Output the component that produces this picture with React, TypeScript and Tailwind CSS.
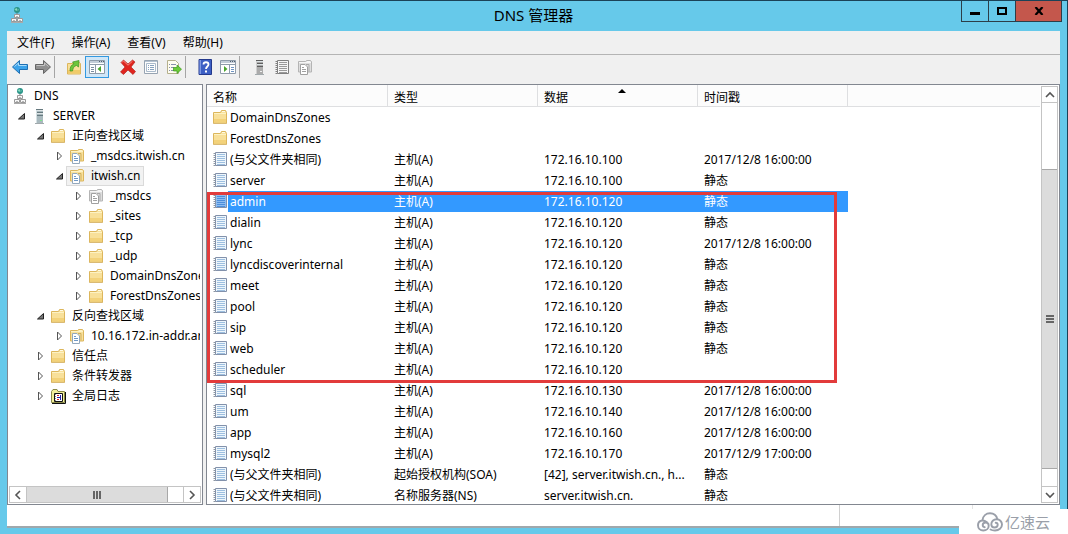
import { useState, type ReactNode } from 'react';
import clsx from 'clsx';

type IconName = 'root' | 'server' | 'folder' | 'zone' | 'zoneGray' | 'log';

type TreeNode = {
  label: string;
  level: 0 | 1 | 2 | 3 | 4;
  icon: IconName;
  open?: boolean;
};

const tree: TreeNode[] = [
  { label: 'DNS', level: 0, icon: 'root' },
  { label: 'SERVER', level: 1, icon: 'server', open: true },
  { label: '正向查找区域', level: 2, icon: 'folder', open: true },
  { label: '_msdcs.itwish.cn', level: 3, icon: 'zone' },
  { label: 'itwish.cn', level: 3, icon: 'zone', open: true },
  { label: '_msdcs', level: 4, icon: 'zoneGray' },
  { label: '_sites', level: 4, icon: 'folder' },
  { label: '_tcp', level: 4, icon: 'folder' },
  { label: '_udp', level: 4, icon: 'folder' },
  { label: 'DomainDnsZones', level: 4, icon: 'folder' },
  { label: 'ForestDnsZones', level: 4, icon: 'folder' },
  { label: '反向查找区域', level: 2, icon: 'folder', open: true },
  { label: '10.16.172.in-addr.arpa', level: 3, icon: 'zone' },
  { label: '信任点', level: 2, icon: 'folder' },
  { label: '条件转发器', level: 2, icon: 'folder' },
  { label: '全局日志', level: 2, icon: 'log' },
];

const indent = {
  0: 'pl-0',
  1: 'pl-2',
  2: 'pl-[27px]',
  3: 'pl-[46px]',
  4: 'pl-[65px]',
};

const SAME = '(与父文件夹相同)';
const HOST = '主机(A)';
const STATIC = '静态';

const records: string[][] = [
  ['DomainDnsZones', '', '', ''],
  ['ForestDnsZones', '', '', ''],
  [SAME, HOST, '172.16.10.100', '2017/12/8 16:00:00'],
  ['server', HOST, '172.16.10.100', STATIC],
  ['admin', HOST, '172.16.10.120', STATIC],
  ['dialin', HOST, '172.16.10.120', STATIC],
  ['lync', HOST, '172.16.10.120', '2017/12/8 16:00:00'],
  ['lyncdiscoverinternal', HOST, '172.16.10.120', STATIC],
  ['meet', HOST, '172.16.10.120', STATIC],
  ['pool', HOST, '172.16.10.120', STATIC],
  ['sip', HOST, '172.16.10.120', STATIC],
  ['web', HOST, '172.16.10.120', STATIC],
  ['scheduler', HOST, '172.16.10.120', ''],
  ['sql', HOST, '172.16.10.130', '2017/12/8 16:00:00'],
  ['um', HOST, '172.16.10.140', '2017/12/8 16:00:00'],
  ['app', HOST, '172.16.10.160', '2017/12/8 16:00:00'],
  ['mysql2', HOST, '172.16.10.170', '2017/12/9 17:00:00'],
  [SAME, '起始授权机构(SOA)', '[42], server.itwish.cn., h...', STATIC],
  [SAME, '名称服务器(NS)', 'server.itwish.cn.', STATIC],
];

function Svg({ children }: { children: ReactNode }) {
  return (
    <svg viewBox="0 0 16 16" className="size-4 shrink-0" fill="none" aria-hidden="true">
      {children}
    </svg>
  );
}

function FolderIcon() {
  return (
    <Svg>
      <path d="M1.500 3.500h7l1-2h4l1 2v10.500h-13z" fill="#f8e09a" stroke="#dcb65c" />
      <path d="M10 2.500h3" stroke="#fffbe6" />
      <path d="M2 4.500h12" stroke="#fdf2c4" />
      <path d="M2 10h12v3.500H2z" fill="#f3d27a" />
      <path d="M1 14.500h14" stroke="#c79a3c" strokeOpacity=".5" />
    </Svg>
  );
}

function ZoneIcon({ gray = false }: { gray?: boolean }) {
  return (
    <Svg>
      <path
        d="M1.500 2.500h7l1-1h4l1 1v10.500h-13z"
        fill={gray ? '#dedede' : '#f8e09a'}
        stroke={gray ? '#b4b4b4' : '#dcb65c'}
      />
      <path d="M10 2.500h3M2 3.500h12" stroke={gray ? '#f6f6f6' : '#fdf2c4'} />
      <path d="M9 5.500h3v7" stroke={gray ? '#aaa' : '#cfae5e'} />
      <path d="M3.500 5.500h4.500l2.500 2.500v7.500h-7z" fill="#fff" stroke={gray ? '#a0a0a0' : '#93a8bd'} />
      <path d="M5 8.500h2M5 10.500h4M5 12.500h4" stroke={gray ? '#a0a0a0' : '#6f98c6'} />
    </Svg>
  );
}

function RecordIcon({ gray = false, selected = false }: { gray?: boolean; selected?: boolean }) {
  const line = gray ? '#9a9a9a' : selected ? '#4d8fdc' : '#9dbfe0';
  return (
    <Svg>
      <path
        d="M3.500 1.500h11v13h-11z"
        fill={selected ? '#8fbdf0' : gray ? '#f6f6f6' : '#eef6fc'}
        stroke={gray ? '#808080' : '#8291ab'}
      />
      <path d="M5 3.500h8M5 5.500h8M5 7.500h8M5 9.500h8M5 11.500h8M5 13.500h8" stroke={line} />
      <path
        d="M1.500 2.500h2M1.500 4.500h2M1.500 6.500h2M1.500 8.500h2M1.500 10.500h2M1.500 12.500h2M1.500 14.500h2"
        stroke={gray ? '#808080' : '#8d96a2'}
      />
    </Svg>
  );
}

function RootIcon() {
  return (
    <Svg>
      <circle cx="8" cy="3" r="3" fill="#2a9488" />
      <path d="M6 2.500c1-1.500 2-1 2 0s-1 1.500-2 0zM8.500 3.500l1.500-1" fill="#8fe0c4" stroke="#8fe0c4" strokeWidth=".6" />
      <path d="M8 6v2" stroke="#777" />
      <path d="M5.500 7.500h5v3h-5zM2.500 11.500h5v3h-5zM8.500 11.500h5v3h-5z" fill="#f7f7f7" stroke="#999" />
      <path d="M2 15.500h12" stroke="#aaa" />
      <path d="M7 9.500h2M4 13.500h2M10 13.500h2" stroke="#b5b5b5" />
    </Svg>
  );
}

function ServerIcon({ gray = false }: { gray?: boolean }) {
  return (
    <Svg>
      <path d="M5 1h7v14H5z" fill={gray ? '#ababab' : '#a9b9be'} />
      <path d="M5 1h1v14H5z" fill={gray ? '#cfcfcf' : '#d5e0e3'} />
      <path d="M5 1.500h7M6 4.500h6M6 7.500h6" stroke={gray ? '#5f5f5f' : '#66797f'} />
      <path d="M6 2.500h6M6 5.500h6" stroke="#dde4e6" />
      <path d="M9 12h2v1H9z" fill={gray ? '#eee' : '#7be38a'} />
      <path d="M4 15.500h9" stroke="#a1a9ac" />
    </Svg>
  );
}

function LogIcon() {
  return (
    <Svg>
      <path d="M1.500 3.500l1.500-2h4l1 2h6.500v11h-13z" fill="#f1ef9a" stroke="#8a8a4a" />
      <path d="M15.500 4v11.500H2" stroke="#111" />
      <path d="M4.500 5.500h8v8h-8z" fill="#fff" stroke="#111" />
      <path d="M5 6v7" stroke="#111" strokeDasharray="1 1" />
      <path d="M7 7.500h2M7 11.500h2" stroke="#d22" />
      <path d="M10.500 7v5M7 9.500h3" stroke="#22a" />
    </Svg>
  );
}

function NodeIcon({ name }: { name: IconName }) {
  if (name === 'root') return <RootIcon />;
  if (name === 'server') return <ServerIcon />;
  if (name === 'zone') return <ZoneIcon />;
  if (name === 'zoneGray') return <ZoneIcon gray />;
  if (name === 'log') return <LogIcon />;
  return <FolderIcon />;
}

function ArrowShape({ fill, edge, shine }: { fill: string; edge: string; shine: string }) {
  return (
    <>
      <path d="M.5 8L7.500 1.500v4h8v5h-8v4z" fill={fill} stroke={edge} strokeLinejoin="round" />
      <path d="M2.500 7.500l4-3.500v2.500h8" stroke={shine} />
    </>
  );
}

function ConsoleIcon({ left = false }: { left?: boolean }) {
  return (
    <Svg>
      <path d="M.5 1.500h15v13H.5z" fill="#fff" stroke="#8f9caa" />
      <path d="M1 2h14v2H1z" fill="#c3cdd8" />
      <path d="M10 2.500h1M12 2.500h1M14 2.500h1" stroke="#51606f" />
      <path d="M1 5.500h14" stroke="#8f9caa" />
      {left ? (
        <>
          <path d="M6.500 6v8" stroke="#8f9caa" />
          <path d="M2 8.500h3M2 10.500h3M2 12.500h3" stroke="#7b8da0" />
          <path d="M12 7v6L8.500 10z" fill="#4aa52e" />
        </>
      ) : (
        <>
          <path d="M9.500 6v8" stroke="#8f9caa" />
          <path d="M11 8.500h3M11 10.500h3M11 12.500h3" stroke="#6f94c2" />
          <path d="M4 7v6l3.500-3z" fill="#4aa52e" />
        </>
      )}
    </Svg>
  );
}

function ToolButton({ label, pressed, children }: { label: string; pressed?: boolean; children: ReactNode }) {
  return (
    <button
      type="button"
      aria-label={label}
      aria-pressed={pressed}
      className={clsx(
        'flex h-[22px] shrink-0 items-center justify-center border',
        pressed ? 'w-6 border-[#3399e0] bg-[#cfe6f7]' : 'w-[23px] border-transparent hover:bg-[#dcebf7]',
      )}
    >
      {children}
    </button>
  );
}

function ToolSeparator() {
  return <span className="mr-[7px] h-[22px] w-px shrink-0 bg-[#a5a5a5]" />;
}

function TitleBar() {
  return (
    <header className="flex h-[30px] shrink-0 items-start">
      <span className="mt-[6px] ml-[9px] w-[97px]">
        <RootIcon />
      </span>
      <h1 className="flex-1 pt-0.5 text-center text-[15px] leading-6">DNS 管理器</h1>
      <div className="mr-[5px] flex h-[21px] border border-t-0 border-[#2c3e48]">
        <button type="button" aria-label="最小化" className="flex w-[27px] items-center justify-center border-r border-[#2c3e48]">
          <span className="mt-1 h-[3px] w-[10px] bg-black" />
        </button>
        <button type="button" aria-label="最大化" className="flex w-[26px] items-center justify-center">
          <span className="h-2 w-[10px] border-2 border-black" />
        </button>
        <button type="button" aria-label="关闭" className="flex w-[46px] items-center justify-center border-l border-[#2c3e48] bg-[#c4574c]">
          <svg viewBox="0 0 10 8" className="h-2 w-[10px]" aria-hidden="true">
            <path d="M1.500 0l7 8M8.500 0l-7 8" stroke="#000" strokeWidth="2.200" />
          </svg>
        </button>
      </div>
    </header>
  );
}

function MenuBar() {
  return (
    <nav className="flex h-6 shrink-0 items-center gap-px border-b border-[#b4b4b4] pl-0.5">
      {['文件(F)', '操作(A)', '查看(V)', '帮助(H)'].map((item) => (
        <button key={item} type="button" className="px-2 leading-5 hover:bg-[#dcebf7]">
          {item}
        </button>
      ))}
    </nav>
  );
}

function ToolBar() {
  return (
    <div role="toolbar" className="flex h-[29px] shrink-0 items-start pt-px pl-px">
      <ToolButton label="后退">
        <Svg>
          <ArrowShape fill="#3ba3ea" edge="#1f6fb2" shine="#a9dcfb" />
        </Svg>
      </ToolButton>
      <ToolButton label="前进">
        <Svg>
          <g transform="matrix(-1 0 0 1 16 0)">
            <ArrowShape fill="#8f8f8f" edge="#666" shine="#c4c4c4" />
          </g>
        </Svg>
      </ToolButton>
      <ToolSeparator />
      <ToolButton label="向上">
        <Svg>
          <path d="M1.500 4.500h7l1-1h4l1 1v10.500h-13z" fill="#f8e09a" stroke="#dcb65c" />
          <path d="M2 11h12v3.500H2z" fill="#f0cb6a" />
          <path d="M4 12c0-4 1-6 4-7L6.500 3 13 1.500 12.500 8l-2-1.500C8 7 7 9 6.500 12z" fill="#6cc63c" stroke="#3f9420" strokeWidth=".7" />
        </Svg>
      </ToolButton>
      <ToolButton label="显示/隐藏控制台树" pressed>
        <ConsoleIcon left />
      </ToolButton>
      <span className="w-[7px] shrink-0" />
      <ToolButton label="删除">
        <Svg>
          <path d="M1 3.500L3.500 1 8 5l4.500-4L15 3l-4 5 4.500 4.500L13 15.500 8 11l-4.500 4.500L.5 13 5 8z" fill="#e0251f" stroke="#a91513" strokeWidth=".6" />
          <path d="M2 3.500L3.500 2 8 6.200 12.500 2.200" stroke="#f58a80" />
        </Svg>
      </ToolButton>
      <ToolButton label="属性">
        <Svg>
          <path d="M1.500 1.500h13v13h-13z" fill="#fdfdfd" stroke="#97a4b2" />
          <path d="M2 2.500h12" stroke="#b4c3d2" />
          <path d="M3.500 4.500h9v8h-9z" stroke="#a9bacb" />
          <path d="M5 6.500h1M7 6.500h4M5 8.500h1M7 8.500h4M5 10.500h1M7 10.500h4" stroke="#86a2bf" />
        </Svg>
      </ToolButton>
      <ToolButton label="导出列表">
        <Svg>
          <path d="M1.500 1.500h8l3 3v10h-11z" fill="#fffdf0" stroke="#b5b08d" />
          <path d="M3 5.500h1M5 5.500h5M3 8.500h1M5 8.500h3M3 11.500h1M5 11.500h5" stroke="#8a92ad" />
          <path d="M7.500 8.500H11V6l4.500 4.200L11 14.500V12H7.500z" fill="#6ccb3a" stroke="#3c9a1d" strokeWidth=".7" />
        </Svg>
      </ToolButton>
      <ToolSeparator />
      <ToolButton label="帮助">
        <Svg>
          <path d="M2 .5h12.500v15H2z" fill="#3c5fc4" stroke="#24398c" />
          <path d="M2.500 1h1.500v14H2.500z" fill="#7d98e2" />
          <path d="M6.500 5.500c0-3 5-3 5 0 0 2-2.500 2-2.500 4.500" stroke="#fff" strokeWidth="1.800" />
          <path d="M8 11.500h2v2H8z" fill="#fff" />
        </Svg>
      </ToolButton>
      <ToolButton label="显示/隐藏操作窗格">
        <ConsoleIcon />
      </ToolButton>
      <ToolSeparator />
      <ToolButton label="新建服务器">
        <ServerIcon gray />
      </ToolButton>
      <ToolButton label="新建记录">
        <RecordIcon gray />
      </ToolButton>
      <ToolButton label="新建区域">
        <ZoneIcon gray />
      </ToolButton>
    </div>
  );
}

function Expander({ open }: { open?: boolean }) {
  return (
    <svg viewBox="0 0 9 10" className="mr-0.5 h-[10px] w-[9px] shrink-0" aria-hidden="true">
      {open ? (
        <path d="M7.500 2.500v5.500H1.500z" fill="#777" stroke="#222" />
      ) : (
        <path d="M2.500 1l4 4-4 4z" fill="#fff" stroke="#555" />
      )}
    </svg>
  );
}

function Chevron({ d }: { d: string }) {
  return (
    <svg viewBox="0 0 10 10" className="size-[10px]" fill="none" aria-hidden="true">
      <path d={d} stroke="#555" strokeWidth="1.600" />
    </svg>
  );
}

function TreePane() {
  const [current, setCurrent] = useState('itwish.cn');

  return (
    <aside className="flex w-[196px] shrink-0 flex-col border border-[#828790] bg-white p-px">
      <ul role="tree" className="mr-px min-h-0 flex-1 overflow-hidden">
        {tree.map((node, i) => (
          <li
            key={i}
            role="treeitem"
            aria-expanded={node.open}
            aria-selected={node.label === current}
            className={clsx('flex h-5 items-center', indent[node.level])}
          >
            {node.level > 0 && <Expander open={node.open} />}
            <button
              type="button"
              onClick={() => setCurrent(node.label)}
              className={clsx(
                'flex h-5 items-center gap-1.5 border px-0.5 whitespace-nowrap',
                node.label === current ? 'border-[#dadada] bg-[#f2f2f2]' : 'border-transparent',
              )}
            >
              <NodeIcon name={node.icon} />
              {node.label}
            </button>
          </li>
        ))}
      </ul>
      <div className="flex h-[17px] shrink-0 border border-[#c4c4c4]">
        <button type="button" aria-label="向左滚动" className="flex w-4 items-center justify-center">
          <Chevron d="M7 1L3 5l4 4" />
        </button>
        <div className="flex flex-1 border-x border-[#c4c4c4]">
          <div className="flex w-[141px] items-center justify-center gap-px border-r border-[#a8a8a8] bg-[#dcdcdc]">
            <span className="h-2 w-0.5 bg-[#666]" />
            <span className="h-2 w-0.5 bg-[#666]" />
            <span className="h-2 w-0.5 bg-[#666]" />
          </div>
        </div>
        <button type="button" aria-label="向右滚动" className="flex w-4 items-center justify-center">
          <Chevron d="M3 1l4 4-4 4" />
        </button>
      </div>
    </aside>
  );
}

function RecordTable() {
  const [selected, setSelected] = useState(4);

  return (
    <table className="w-full table-fixed border-separate border-spacing-0 text-left">
      <colgroup>
        <col className="w-[181px]" />
        <col className="w-[150px]" />
        <col className="w-[160px]" />
        <col className="w-[150px]" />
        <col />
      </colgroup>
      <thead>
        <tr className="bg-[#fcfcfc]">
          {['名称', '类型', '数据', '时间戳'].map((title) => (
            <th key={title} scope="col" className="relative border-r border-b border-[#dedfe1] p-0 pt-1 pl-1.5 leading-[17px] font-normal">
              {title}
              {title === '数据' && (
                <svg viewBox="0 0 8 4" className="absolute top-1 left-1/2 h-1 w-2" aria-hidden="true">
                  <path d="M0 4l4-4 4 4z" fill="#000" />
                </svg>
              )}
            </th>
          ))}
          <td className="border-b border-[#dedfe1] p-0" />
        </tr>
      </thead>
      <tbody>
        {records.map(([name, type, data, time], i) => {
          const active = i === selected;
          const fill = active && 'bg-[#3399ff] text-white';
          return (
            <tr key={i} className="h-[21px] leading-[21px] whitespace-nowrap" onClick={() => setSelected(i)}>
              <td className="p-0">
                <div className="flex h-[21px] items-start pl-[5px]">
                  <span className="pt-0.5">{type ? <RecordIcon selected={active} /> : <FolderIcon />}</span>
                  <span className={clsx('h-[21px] flex-1 pl-0.5', fill)}>{name}</span>
                </div>
              </td>
              <td className={clsx('p-0 pl-1.5', fill)}>{type}</td>
              <td className={clsx('p-0 pl-1.5', fill)}>{data}</td>
              <td className={clsx('p-0 pl-1.5', fill)}>{time}</td>
              <td className="p-0" />
            </tr>
          );
        })}
      </tbody>
    </table>
  );
}

function ListPane() {
  return (
    <main className="flex min-w-0 flex-1 border border-[#828790] bg-white">
      <div className="relative min-w-0 flex-1 overflow-hidden">
        <RecordTable />
        {/* frame around the Lync host records */}
        <div className="pointer-events-none absolute top-[107px] left-0 h-[191px] w-[630px] border-3 border-[#e23b3b]" />
      </div>
      <div className="m-px flex w-[17px] shrink-0 flex-col border border-[#c4c4c4]">
        <button type="button" aria-label="向上滚动" className="flex h-4 items-center justify-center border-b border-[#c4c4c4]">
          <Chevron d="M1 7l4-4 4 4" />
        </button>
        <div className="flex min-h-0 flex-1 flex-col pt-[66px] pb-[17px]">
          <div className="flex flex-1 flex-col items-center justify-center gap-px border-y border-[#a8a8a8] bg-[#dcdcdc]">
            <span className="h-0.5 w-2 bg-[#666]" />
            <span className="h-0.5 w-2 bg-[#666]" />
            <span className="h-0.5 w-2 bg-[#666]" />
          </div>
        </div>
        <button type="button" aria-label="向下滚动" className="flex h-4 items-center justify-center border-t border-[#c4c4c4]">
          <Chevron d="M1 3l4 4 4-4" />
        </button>
      </div>
    </main>
  );
}

function StatusBar() {
  return (
    <footer className="flex h-[23px] shrink-0 border-b-2 border-[#a0a8ac] bg-white">
      <span className="flex-1 border-r border-[#d0d0d0]" />
      <span className="w-[133px] border-r border-[#e4e4e4]" />
      <span className="w-[87px]" />
    </footer>
  );
}

function Watermark() {
  return (
    <div className="absolute right-0 bottom-0 flex h-[25px] w-[109px] items-center gap-0.5 bg-white pl-[18px] text-[15px] leading-5 text-[#9a9fa9]">
      <svg viewBox="0 0 26 20" className="h-5 w-[26px]" fill="none" stroke="#9a9fa9" strokeWidth="1.900" strokeLinecap="round" aria-hidden="true">
        <path d="M5.500 8C6 4 9 1.200 13 1.200c3.800 0 6.500 2.400 7.300 5.800" />
        <path d="M10 10.200C5 6.500 1 9.500 1 13.200c0 3 2.300 5.300 5.300 5.300 3.200 0 5.400-2.300 5.400-4.800 0-1.800-1.300-3.200-3-3.200s-3 1.200-3 2.600 1 2.100 2 2.100" />
        <path d="M13.500 17.500c1.300.8 2.800 1 4.500 1 4 0 7-2.500 7-6 0-3-2.500-5.300-5.300-5.300-3.300 0-5.400 2.500-5.400 5 0 1.900 1.300 3.300 3.200 3.300s3.200-1.200 3.200-2.700-1-2.100-2-2.100" />
      </svg>
      亿速云
    </div>
  );
}

export default function App() {
  return (
    <div className="relative h-screen overflow-hidden font-['Noto_Sans','Noto_Sans_CJK_SC',sans-serif] text-xs text-black">
      <div className="flex h-full flex-col border-t border-r border-[#1b4257] bg-[#66c9ea]">
        <TitleBar />
        <div className="mx-[7px] mb-[6px] flex min-h-0 flex-1 flex-col bg-[#f0f0f0]">
          <MenuBar />
          <ToolBar />
          <div className="flex min-h-0 flex-1 gap-[3px]">
            <TreePane />
            <ListPane />
          </div>
          <StatusBar />
        </div>
      </div>
      <Watermark />
    </div>
  );
}
